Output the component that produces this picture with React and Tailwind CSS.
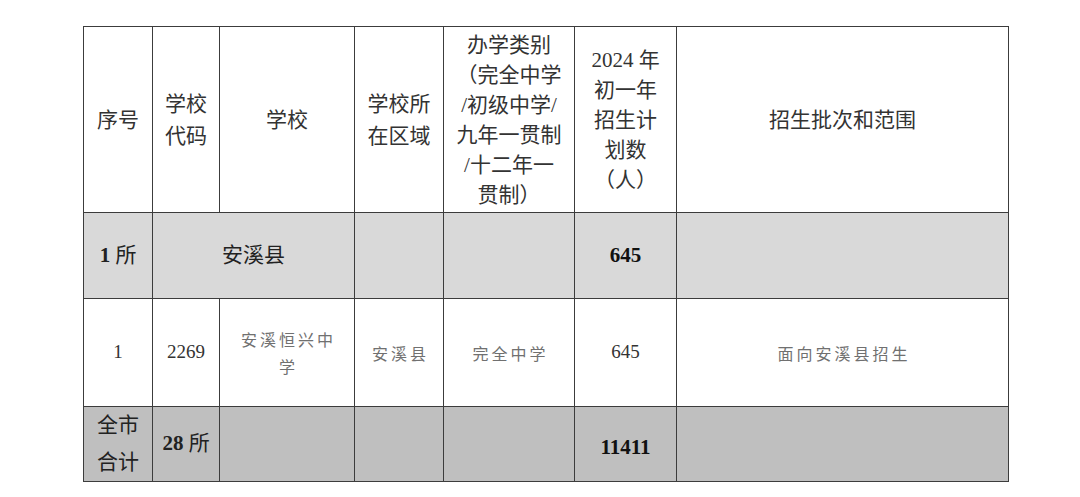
export default function App() {
  const font = { fontFamily: '"Liberation Serif", "Noto Sans CJK SC", serif' };
  const sans = { fontFamily: '"Noto Sans CJK SC", sans-serif' };
  const cell = 'border border-[#3c3c3c] text-center align-middle p-0';
  const light = 'text-[16px] text-[#707070] tracking-[3px] pl-[3px]';

  return (
    <div className="w-[1080px] h-[497px] bg-white overflow-hidden" style={font}>
      <div className="pt-[26px] pl-[83px]">
        <table className="table-fixed border-collapse w-[926px] text-[21px] text-[#333]">
          <colgroup>
            <col className="w-[69px]" />
            <col className="w-[67px]" />
            <col className="w-[135px]" />
            <col className="w-[89px]" />
            <col className="w-[131px]" />
            <col className="w-[102px]" />
            <col className="w-[332px]" />
          </colgroup>
          <tbody>
            {/* header */}
            <tr className="h-[186px] leading-[30px]">
              <td className={cell}>序号</td>
              <td className={`${cell} leading-[32px]`}>学校<br />代码</td>
              <td className={cell}>学校</td>
              <td className={`${cell} leading-[32px]`}>学校所<br />在区域</td>
              <td className={cell}>
                办学类别<br />（完全中学<br />/初级中学/<br />九年一贯制<br />/十二年一<br />贯制）
              </td>
              <td className={cell}>
                2024 年<br />初一年<br />招生计<br />划数<br />（人）
              </td>
              <td className={cell}>招生批次和范围</td>
            </tr>

            {/* county row */}
            <tr className="h-[86px] bg-[#d9d9d9] text-[#222]">
              <td className={cell}><b>1</b> 所</td>
              <td className={cell} colSpan={2}>安溪县</td>
              <td className={cell}></td>
              <td className={cell}></td>
              <td className={`${cell} font-bold text-[#111]`}>645</td>
              <td className={cell}></td>
            </tr>

            {/* school row */}
            <tr className="h-[108px] text-[19px]">
              <td className={cell}>1</td>
              <td className={cell}>2269</td>
              <td className={`${cell} ${light} leading-[27px]`} style={sans}>
                安溪恒兴中<br />学
              </td>
              <td className={`${cell} ${light}`} style={sans}>安溪县</td>
              <td className={`${cell} ${light}`} style={sans}>完全中学</td>
              <td className={cell}>645</td>
              <td className={`${cell} ${light}`} style={sans}>面向安溪县招生</td>
            </tr>

            {/* total row */}
            <tr className="h-[73px] bg-[#bfbfbf] text-[#222]">
              <td className={`${cell} leading-[37px]`}>全市<br />合计</td>
              <td className={cell}><b>28</b> 所</td>
              <td className={cell}></td>
              <td className={cell}></td>
              <td className={cell}></td>
              <td className={`${cell} font-bold text-[#111] pt-[8px]`}>11411</td>
              <td className={cell}></td>
            </tr>
          </tbody>
        </table>
      </div>
    </div>
  );
}
